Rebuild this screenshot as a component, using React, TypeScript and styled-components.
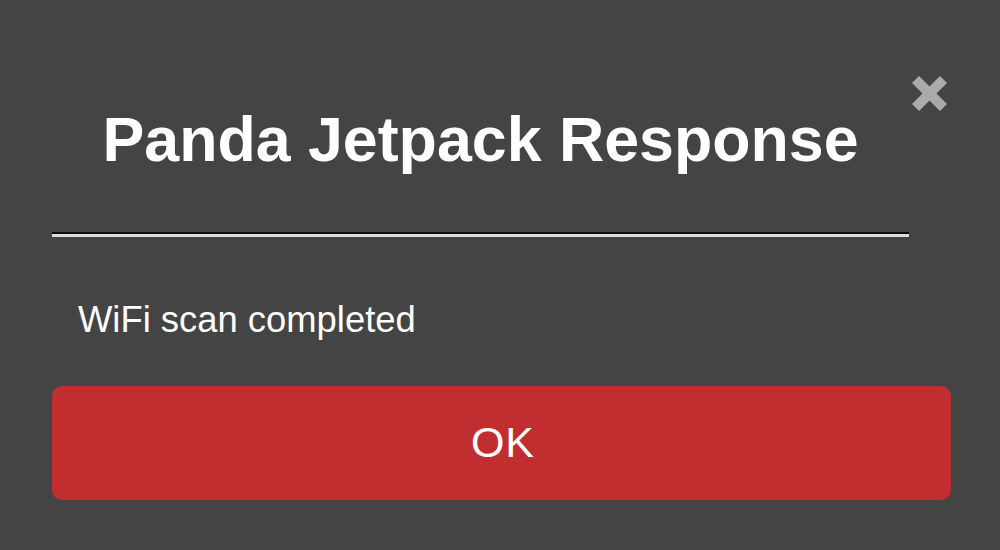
import styled, { createGlobalStyle } from 'styled-components';

const GlobalStyle = createGlobalStyle`
    html, body {
        margin: 0;
        padding: 0;
        background: #444444;
    }
    body {
        font-family: 'Liberation Sans', Arial, sans-serif;
    }
`;

const Dialog = styled.div`
    width: 1000px;
    height: 550px;
    box-sizing: border-box;
    padding: 76px 49px 0 52px;
    background: #444444;
    display: flex;
    flex-direction: column;
`;

const Header = styled.div`
    display: flex;
    flex-direction: row;
    align-items: flex-start;
`;

const HeaderMain = styled.div`
    width: 857px;
    display: flex;
    flex-direction: column;
`;

const Title = styled.h1`
    margin: 26px 0 0 0;
    color: #ffffff;
    font-size: 62.7px;
    font-weight: bold;
    line-height: 74px;
    text-align: center;
`;

const Divider = styled.hr`
    margin: 56px 0 0 0;
    height: 0;
    border: none;
    border-top: 2px solid #0d0d0d;
    border-bottom: 3px solid #dcdcdc;
`;

const CloseButton = styled.button`
    margin-left: 3px;
    width: 35px;
    height: 35px;
    padding: 0;
    border: none;
    outline: none;
    background: transparent;
    cursor: pointer;
    display: flex;
`;

const Message = styled.p`
    margin: 61px 0 0 26px;
    color: #ffffff;
    font-size: 36.4px;
    line-height: 44px;
`;

const OkButton = styled.button`
    margin-top: 44px;
    width: 100%;
    height: 114px;
    border: none;
    border-radius: 10px;
    background: #c02e30;
    color: #ffffff;
    font-family: 'Liberation Sans', Arial, sans-serif;
    font-size: 43px;
    letter-spacing: 1px;
    padding: 0 0 2px 3px;
    cursor: pointer;
`;

const CloseIcon = () => (
    <svg width='35' height='35' viewBox='0 0 35 35'>
        <g stroke='#aaaaaa' strokeWidth='10' strokeLinecap='butt'>
            <line x1='3.5' y1='3.5' x2='31.5' y2='31.5' />
            <line x1='31.5' y1='3.5' x2='3.5' y2='31.5' />
        </g>
    </svg>
);

const App: React.FC = () => {
    return (
        <>
            <GlobalStyle />
            <Dialog>
                <Header>
                    <HeaderMain>
                        <Title>Panda Jetpack Response</Title>
                        <Divider />
                    </HeaderMain>
                    <CloseButton aria-label='Close'>
                        <CloseIcon />
                    </CloseButton>
                </Header>
                <Message>WiFi scan completed</Message>
                <OkButton>OK</OkButton>
            </Dialog>
        </>
    );
};

export default App;
